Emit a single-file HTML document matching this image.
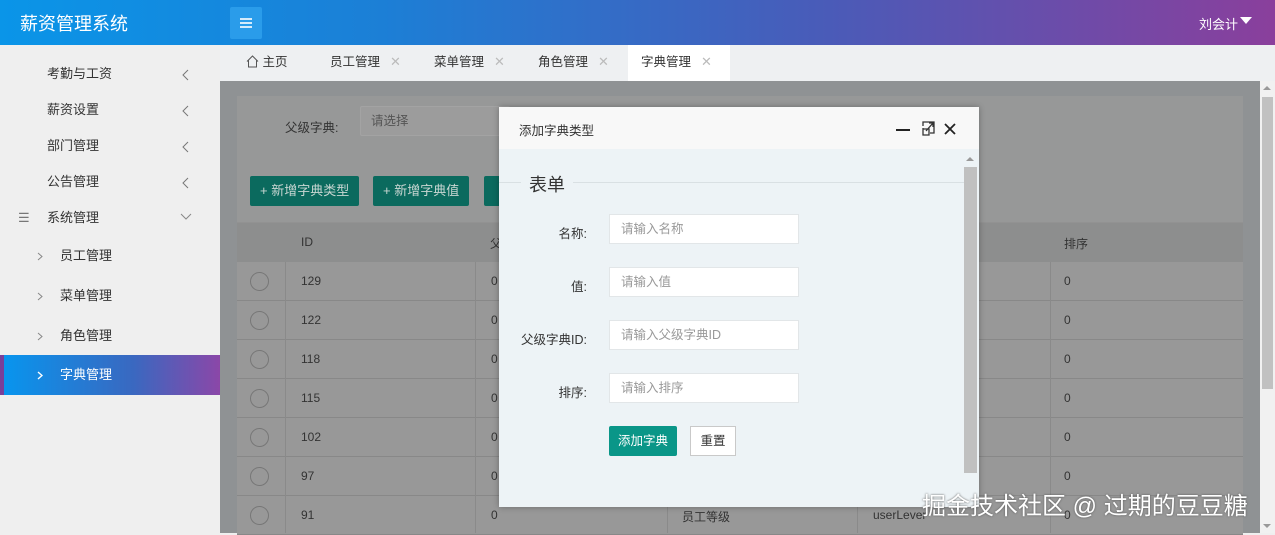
<!DOCTYPE html><html><head><meta charset="utf-8"><style>
*{margin:0;padding:0;box-sizing:border-box}
body{width:1275px;height:533px;overflow:hidden;position:relative;font-family:"Liberation Sans","Noto Sans CJK SC",sans-serif;font-size:13px;color:#333;background:#efefef}
.a{position:absolute}
.hd{left:0;top:0;width:1275px;height:45px;background:linear-gradient(90deg,#0a95e8 0%,#1c7fd6 30%,#4a5bb8 65%,#8a3f9c 100%)}
.sb{left:0;top:45px;width:220px;height:488px;background:#efefef}
.mi{position:absolute;left:0;width:220px;height:40px;line-height:40px;font-size:13px;color:#333}
.tabs{left:220px;top:45px;width:1055px;height:36px;background:#eef0f2}
.tab{position:absolute;top:0;height:36px;line-height:34px;font-size:12.5px;color:#333}
.x{color:#bbb;margin-left:10px;font-size:13px}
.ct{left:220px;top:81px;width:1040px;height:452px;background:#8f9294}
.card{left:237px;top:96px;width:1006px;height:437px;background:#979898}
.btn{position:absolute;top:176px;height:30px;line-height:30px;background:#0b6a5e;color:#c8d6d2;font-size:13px;border-radius:2px;padding:0 10px}
.cell{position:absolute;font-size:12px;color:#333}
.modal{left:499px;top:107px;width:480px;height:400px;background:#edf3f6;box-shadow:0 0 6px rgba(0,0,0,.3)}
.inp{position:absolute;left:110px;width:190px;height:30px;background:#fff;border:1px solid #e2e6e8;padding-left:11px;line-height:28px;color:#999;font-size:12.5px}
.lb{position:absolute;width:88px;text-align:right;font-size:12.5px;color:#333}
.chev{position:absolute;left:182px;top:15px}
</style></head><body>
<div class="a hd">
 <div class="a" style="left:20px;top:10px;color:#fff;font-size:18px">薪资管理系统</div>
 <div class="a" style="left:230px;top:7px;width:32px;height:32px;background:#2a9cea;border-radius:2px">
  <svg width="32" height="32"><g stroke="#fff" stroke-width="1.6"><line x1="10" y1="12" x2="22" y2="12"/><line x1="10" y1="16" x2="22" y2="16"/><line x1="10" y1="20" x2="22" y2="20"/></g></svg></div>
 <div class="a" style="left:1199px;top:14px;color:#fff;font-size:13px">刘会计</div>
 <div class="a" style="left:1240px;top:17px;width:0;height:0;border-left:6px solid transparent;border-right:6px solid transparent;border-top:7px solid #fff"></div>
</div>
<div class="a sb">
 <div class="mi" style="top:9px"><span class="a" style="left:47px">考勤与工资</span><svg class="chev" width="8" height="12"><path d="M6 1L1 6L6 11" stroke="#777" fill="none"/></svg></div>
 <div class="mi" style="top:45px"><span class="a" style="left:47px">薪资设置</span><svg class="chev" width="8" height="12"><path d="M6 1L1 6L6 11" stroke="#777" fill="none"/></svg></div>
 <div class="mi" style="top:81px"><span class="a" style="left:47px">部门管理</span><svg class="chev" width="8" height="12"><path d="M6 1L1 6L6 11" stroke="#777" fill="none"/></svg></div>
 <div class="mi" style="top:117px"><span class="a" style="left:47px">公告管理</span><svg class="chev" width="8" height="12"><path d="M6 1L1 6L6 11" stroke="#777" fill="none"/></svg></div>
 <div class="mi" style="top:153px"><span class="a" style="left:18px;color:#777">&#9776;</span><span class="a" style="left:47px">系统管理</span><svg class="a" style="left:180px;top:15px" width="12" height="8"><path d="M1 1L6 6L11 1" stroke="#888" fill="none"/></svg></div>
 <div class="mi" style="top:191px"><svg class="a" style="left:37px;top:16px" width="6" height="9"><path d="M1 1L5 4.5L1 8" stroke="#888" fill="none"/></svg><span class="a" style="left:60px">员工管理</span></div>
 <div class="mi" style="top:231px"><svg class="a" style="left:37px;top:16px" width="6" height="9"><path d="M1 1L5 4.5L1 8" stroke="#888" fill="none"/></svg><span class="a" style="left:60px">菜单管理</span></div>
 <div class="mi" style="top:271px"><svg class="a" style="left:37px;top:16px" width="6" height="9"><path d="M1 1L5 4.5L1 8" stroke="#888" fill="none"/></svg><span class="a" style="left:60px">角色管理</span></div>
 <div class="mi" style="top:310px;background:linear-gradient(90deg,#0895ee,#3a68c0 60%,#8b47a8);color:#fff;border-left:4px solid #7a3f99"><svg class="a" style="left:33px;top:16px" width="6" height="9"><path d="M1 1L5 4.5L1 8" stroke="#fff" fill="none" stroke-width="1.4"/></svg><span class="a" style="left:56px">字典管理</span></div>
</div>
<div class="a tabs">
 <div class="tab" style="left:26px"><svg width="13" height="13" style="vertical-align:-2px"><path d="M1 6.5L6.5 1L12 6.5M2.5 5.5V12H10.5V5.5" stroke="#555" fill="none"/></svg> 主页</div>
 <div class="tab" style="left:110px">员工管理<span class="x">✕</span></div>
 <div class="tab" style="left:214px">菜单管理<span class="x">✕</span></div>
 <div class="tab" style="left:318px">角色管理<span class="x">✕</span></div>
 <div class="tab" style="left:408px;width:102px;background:#fff;padding-left:13px">字典管理<span class="x">✕</span></div>
</div>
<div class="a ct"></div>
<div class="a card"></div>
<div class="a" style="left:285px;top:117px;font-size:12.5px">父级字典:</div>
<div class="a" style="left:360px;top:106px;width:150px;height:30px;border:1px solid #a3a3a3;background:#9c9c9c;border-radius:2px;padding-left:10px;line-height:28px;color:#555;font-size:12.5px">请选择</div>
<div class="btn" style="left:250px">+ 新增字典类型</div>
<div class="btn" style="left:373px">+ 新增字典值</div>
<div class="btn" style="left:484px;width:20px"></div>
<div class="a" style="left:237px;top:222px;width:1006px;height:40px;background:#8d8e8e;border-top:1px solid #929292"></div>
<div class="cell" style="left:301px;top:235px">ID</div>
<div class="cell" style="left:490px;top:235px">父</div>
<div class="cell" style="left:1064px;top:235px">排序</div>
<div id="rows"></div>
<script>
var ids=[129,122,118,115,102,97,91],h='';
ids.forEach(function(v,i){var t=262+i*39;
h+='<div class="a" style="left:237px;top:'+t+'px;width:1006px;height:39px;background:#989898;border-bottom:1px solid #888"></div>';
h+='<div class="a" style="left:250px;top:'+(t+10)+'px;width:19px;height:19px;border:1px solid #777;border-radius:50%"></div>';
h+='<div class="cell" style="left:301px;top:'+(t+12)+'px">'+v+'</div>';
h+='<div class="cell" style="left:491px;top:'+(t+12)+'px">0</div>';
h+='<div class="cell" style="left:1064px;top:'+(t+12)+'px">0</div>';});
[285,475,667,857,1050].forEach(function(x){h+='<div class="a" style="left:'+x+'px;top:262px;width:1px;height:271px;background:#8a8a8a"></div>'});
h+='<div class="cell" style="left:682px;top:508px">员工等级</div><div class="cell" style="left:873px;top:508px">userLever</div>';
document.getElementById('rows').innerHTML=h;
</script>
<div class="a" style="left:1260px;top:81px;width:15px;height:452px;background:#f1f1f1"></div>
<div class="a" style="left:1262px;top:97px;width:11px;height:292px;background:#c1c1c1"></div>
<div class="a" style="left:1263px;top:86px;border-left:4px solid transparent;border-right:4px solid transparent;border-bottom:4px solid #999"></div>
<div class="a" style="left:1263px;top:524px;border-left:4px solid transparent;border-right:4px solid transparent;border-top:4px solid #999"></div>
<div class="a modal">
 <div class="a" style="left:0;top:0;width:480px;height:42px;background:#f8f8f8"></div>
 <div class="a" style="left:20px;top:13px;font-size:12.5px;color:#333">添加字典类型</div>
 <svg class="a" style="left:395px;top:14px" width="70" height="16"><line x1="2" y1="9" x2="16" y2="9" stroke="#222" stroke-width="2"/><path d="M29 5V1H40V12H36M29 7V14H35V8H29M32 10L39 2M35 2H39V6" stroke="#333" fill="none" stroke-width="1.3"/><path d="M51 3L61 13M61 3L51 13" stroke="#222" stroke-width="1.8"/></svg>
 <div class="a" style="left:0;top:75px;width:465px;height:1px;background:#d9e0e3"></div>
 <div class="a" style="left:22px;top:64px;padding:0 8px;background:#edf3f6;font-size:18px;color:#333">表单</div>
 <div class="lb" style="left:0;top:116px">名称:</div><div class="inp" style="top:107px">请输入名称</div>
 <div class="lb" style="left:0;top:169px">值:</div><div class="inp" style="top:160px">请输入值</div>
 <div class="lb" style="left:0;top:222px">父级字典ID:</div><div class="inp" style="top:213px">请输入父级字典ID</div>
 <div class="lb" style="left:0;top:275px">排序:</div><div class="inp" style="top:266px">请输入排序</div>
 <div class="a" style="left:110px;top:319px;width:68px;height:30px;background:#0a9688;color:#fff;font-size:12.5px;line-height:30px;text-align:center;border-radius:2px">添加字典</div>
 <div class="a" style="left:191px;top:319px;width:46px;height:30px;background:#fff;border:1px solid #c9c9c9;font-size:12.5px;line-height:28px;text-align:center">重置</div>
 <div class="a" style="left:465px;top:48px;width:14px;height:328px;background:#edf3f6"></div>
 <div class="a" style="left:465px;top:60px;width:13px;height:306px;background:#c0c0c0"></div>
 <div class="a" style="left:467px;top:50px;border-left:4px solid transparent;border-right:4px solid transparent;border-bottom:4px solid #999"></div>
</div>
<div class="a" style="left:922px;top:486px;font-size:24px;color:#fff;text-shadow:0 0 2px #555;white-space:nowrap">掘金技术社区 @ 过期的豆豆糖</div>
</body></html>
